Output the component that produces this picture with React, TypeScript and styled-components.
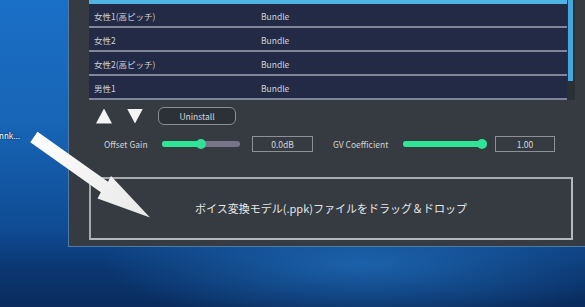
import React from "react";
import styled, { createGlobalStyle } from "styled-components";

const GlobalStyle = createGlobalStyle`
  html, body { margin: 0; padding: 0; background: #0c3c7c; }
  * { box-sizing: border-box; }
`;

const FONT = `"Noto Sans CJK JP", "Noto Sans", sans-serif`;

const Desktop = styled.div`
  position: relative;
  width: 585px;
  height: 307px;
  overflow: hidden;
  display: flex;
  align-items: flex-start;
  padding-left: 68px;
  font-family: ${FONT};
  background:
    radial-gradient(ellipse 260px 60px at 62% 86%, rgba(30, 105, 180, 0.85) 0%, rgba(30, 105, 180, 0) 100%),
    linear-gradient(180deg, #1a6fc6 0%, #1765b6 40%, #0f4b93 75%, #0b3670 88%, #0a2c5e 100%);
`;

const IconLabel = styled.span`
  position: absolute;
  left: -1px;
  top: 130px;
  font-size: 8px;
  color: #ffffff;
  text-shadow: 0 0 2px rgba(0, 0, 0, 0.8);
`;

const Window = styled.div`
  margin-top: -20px;
  width: 540px;
  background: #353b40;
  border-left: 1px solid #4f7aa6;
  border-bottom: 1px solid #4f7aa6;
  padding: 0 0 6px 20px;
  display: flex;
  flex-direction: column;
`;

const ListArea = styled.div`
  display: flex;
  width: 486px;
`;

const List = styled.div`
  width: 478px;
  display: flex;
  flex-direction: column;
`;

const Row = styled.div<{ $selected?: boolean }>`
  height: 24px;
  display: flex;
  align-items: center;
  padding-left: 5px;
  padding-top: 1px;
  background: ${(p) => (p.$selected ? "#4fb3e4" : "#222a45")};
  border-bottom: 2px solid ${(p) => (p.$selected ? "#4fb3e4" : "#80859a")};
  font-size: 8.5px;
  color: #cdd1da;
`;

const NameCell = styled.span`
  width: 167px;
`;

const TypeCell = styled.span``;

const ScrollTrack = styled.div`
  width: 8px;
  background: #2b3034;
  display: flex;
  flex-direction: column;
`;

const ScrollThumb = styled.div`
  margin-left: 1px;
  width: 5px;
  height: 101px;
  background: #45a7dc;
`;

const Controls = styled.div`
  margin-top: 7px;
  height: 18px;
  display: flex;
  align-items: center;
  padding-left: 7px;
  gap: 15px;
`;

const Triangle = styled.div<{ $down?: boolean }>`
  width: 16px;
  height: 15px;
  background: #f4f4f4;
  clip-path: ${(p) =>
    p.$down ? "polygon(0 0, 100% 0, 50% 100%)" : "polygon(50% 0, 100% 100%, 0 100%)"};
`;

const Button = styled.button`
  width: 78px;
  height: 18px;
  border: 1.5px solid #8a9096;
  border-radius: 6px;
  background: #2b3136;
  color: #d6d9de;
  font-family: ${FONT};
  font-size: 8.5px;
  padding: 0;
  display: flex;
  align-items: center;
  justify-content: center;
`;

const Params = styled.div`
  margin-top: 11px;
  height: 16px;
  display: flex;
  align-items: center;
  padding-left: 15px;
`;

const ParamLabel = styled.span<{ $w: number }>`
  width: ${(p) => p.$w}px;
  font-size: 8.5px;
  color: #cfd2d7;
`;

const SliderTrack = styled.div<{ $w: number }>`
  position: relative;
  width: ${(p) => p.$w}px;
  height: 6px;
  border-radius: 3px;
  background: #77748a;
`;

const SliderFill = styled.div`
  height: 100%;
  border-radius: 3px;
  background: #2fe497;
`;

const SliderKnob = styled.div`
  position: absolute;
  top: -2px;
  width: 10px;
  height: 10px;
  margin-left: -5px;
  border-radius: 50%;
  background: #2fe497;
`;

const ValueBox = styled.div<{ $w: number; $ml: number }>`
  width: ${(p) => p.$w}px;
  margin-left: ${(p) => p.$ml}px;
  height: 16px;
  border: 1px solid #8d9196;
  display: flex;
  align-items: center;
  justify-content: center;
  font-size: 8.5px;
  color: #d3d6da;
`;

const DropZone = styled.div`
  margin-top: 25px;
  width: 484px;
  height: 63px;
  border: 2px solid #b4b8bc;
  border-top-color: #a6aaae;
  border-left-color: #a6aaae;
  display: flex;
  align-items: center;
  justify-content: center;
  font-size: 11px;
  color: #e6e8ea;
  padding-bottom: 2px;
`;

const ArrowSvg = styled.svg`
  position: absolute;
  left: 0;
  top: 0;
  pointer-events: none;
`;

const Slider: React.FC<{ width: number; value: number }> = ({ width, value }) => {
  const center = 5 + value * (width - 10);
  return (
    <SliderTrack $w={width}>
      <SliderFill style={{ width: `${center}px` }} />
      <SliderKnob style={{ left: `${center}px` }} />
    </SliderTrack>
  );
};

const rows = [
  { name: "", type: "", selected: true },
  { name: "女性1(高ピッチ)", type: "Bundle" },
  { name: "女性2", type: "Bundle" },
  { name: "女性2(高ピッチ)", type: "Bundle" },
  { name: "男性1", type: "Bundle" },
];

export default function App() {
  return (
    <>
      <GlobalStyle />
      <Desktop>
        <IconLabel>nnk...</IconLabel>
        <Window>
          <ListArea>
            <List>
              {rows.map((r, i) => (
                <Row key={i} $selected={r.selected}>
                  <NameCell>{r.name}</NameCell>
                  <TypeCell>{r.type}</TypeCell>
                </Row>
              ))}
            </List>
            <ScrollTrack>
              <ScrollThumb />
            </ScrollTrack>
          </ListArea>
          <Controls>
            <Triangle />
            <Triangle $down />
            <Button>Uninstall</Button>
          </Controls>
          <Params>
            <ParamLabel $w={58}>Offset Gain</ParamLabel>
            <Slider width={78} value={0.5} />
            <ValueBox $w={61} $ml={12}>0.0dB</ValueBox>
            <ParamLabel $w={70} style={{ marginLeft: 20 }}>GV Coefficient</ParamLabel>
            <Slider width={84} value={1} />
            <ValueBox $w={60} $ml={8}>1.00</ValueBox>
          </Params>
          <DropZone>ボイス変換モデル(.ppk)ファイルをドラッグ＆ドロップ</DropZone>
        </Window>
        <ArrowSvg width="585" height="307" viewBox="0 0 585 307">
          <defs>
            <linearGradient id="arrowShade" x1="0" y1="0" x2="1" y2="1">
              <stop offset="0" stopColor="#ffffff" />
              <stop offset="1" stopColor="#e8e8e8" />
            </linearGradient>
          </defs>
          <polygon
            points="37.5,131.8 108,181.8 111,176 150,217.5 97.5,198.5 100.8,192.2 30.3,142.2"
            fill="url(#arrowShade)"
          />
        </ArrowSvg>
      </Desktop>
    </>
  );
}
